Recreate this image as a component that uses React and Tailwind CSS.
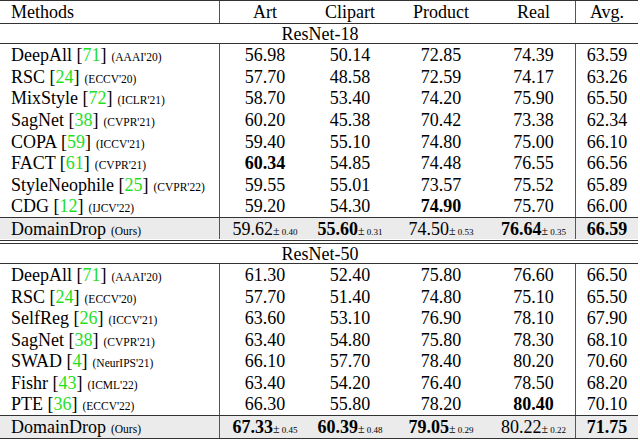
import React from "react";

const W = ["w-[220px]", "w-[90px]", "w-[80px]", "w-[102px]", "w-[84px]", "w-[62px]"];

function Line() {
  return <div className="h-px w-[638px] bg-[#333]" />;
}

function Method({ name, cite, venue }) {
  return (
    <span className="whitespace-nowrap">
      {name}
      {cite && (
        <>
          {" "}[<span className="text-[#1fe01f]">{cite}</span>]
        </>
      )}
      <span className="text-[11.5px] ml-[5px]">{venue}</span>
    </span>
  );
}

function Num({ v, b, pm }) {
  return (
    <span className="whitespace-nowrap">
      <span className={b ? "font-bold" : ""}>{v}</span>
      {pm && (
        <>
          <span className="text-[12px]">±</span>
          <span className="text-[9px]"> {pm}</span>
        </>
      )}
    </span>
  );
}

function Row({ h, shaded, m, vals }) {
  return (
    <div className={`flex w-[638px] ${h} ${shaded ? "bg-[#ebebeb]" : ""}`}>
      <div className={`${W[0]} flex items-center pl-[11px] border-r border-[#555]`}>{m}</div>
      {vals.map((v, i) => (
        <div
          key={i}
          className={`${W[i + 1]} flex items-center justify-center ${i === 3 ? "border-r border-[#555]" : ""}`}
        >
          {v}
        </div>
      ))}
    </div>
  );
}

const r18 = [
  ["DeepAll", "71", "(AAAI'20)", ["56.98", "50.14", "72.85", "74.39", "63.59"]],
  ["RSC", "24", "(ECCV'20)", ["57.70", "48.58", "72.59", "74.17", "63.26"]],
  ["MixStyle", "72", "(ICLR'21)", ["58.70", "53.40", "74.20", "75.90", "65.50"]],
  ["SagNet", "38", "(CVPR'21)", ["60.20", "45.38", "70.42", "73.38", "62.34"]],
  ["COPA", "59", "(ICCV'21)", ["59.40", "55.10", "74.80", "75.00", "66.10"]],
  ["FACT", "61", "(CVPR'21)", ["*60.34", "54.85", "74.48", "76.55", "66.56"]],
  ["StyleNeophile", "25", "(CVPR'22)", ["59.55", "55.01", "73.57", "75.52", "65.89"]],
  ["CDG", "12", "(IJCV'22)", ["59.20", "54.30", "*74.90", "75.70", "66.00"]],
];
const h18 = ["h-[22px]", "h-[21px]", "h-[22px]", "h-[22px]", "h-[21px]", "h-[22px]", "h-[21px]", "h-[22px]"];

const r50 = [
  ["DeepAll", "71", "(AAAI'20)", ["61.30", "52.40", "75.80", "76.60", "66.50"]],
  ["RSC", "24", "(ECCV'20)", ["57.70", "51.40", "74.80", "75.10", "65.50"]],
  ["SelfReg", "26", "(ICCV'21)", ["63.60", "53.10", "76.90", "78.10", "67.90"]],
  ["SagNet", "38", "(CVPR'21)", ["63.40", "54.80", "75.80", "78.30", "68.10"]],
  ["SWAD", "4", "(NeurIPS'21)", ["66.10", "57.70", "78.40", "80.20", "70.60"]],
  ["Fishr", "43", "(ICML'22)", ["63.40", "54.20", "76.40", "78.50", "68.20"]],
  ["PTE", "36", "(ECCV'22)", ["66.30", "55.80", "78.20", "*80.40", "70.10"]],
];
const h50 = ["h-[22px]", "h-[21px]", "h-[22px]", "h-[21px]", "h-[22px]", "h-[21px]", "h-[22px]"];

function cells(vals) {
  return vals.map((v) => (v.startsWith("*") ? <Num v={v.slice(1)} b /> : <Num v={v} />));
}

export default function App() {
  return (
    <div
      className="w-[640px] h-[440px] bg-white text-black text-[18px] leading-none overflow-hidden"
      style={{ fontFamily: '"Liberation Serif", "Times New Roman", serif' }}
    >
      <Line />
      <Row
        h="h-[22px]"
        m={<span>Methods</span>}
        vals={[<span>Art</span>, <span>Clipart</span>, <span>Product</span>, <span>Real</span>, <span>Avg.</span>]}
      />
      <Line />
      <div className="h-[19px] w-[638px] flex items-center justify-center pl-[2px]">ResNet-18</div>
      <Line />
      {r18.map((r, i) => (
        <Row key={i} h={h18[i]} m={<Method name={r[0]} cite={r[1]} venue={r[2]} />} vals={cells(r[3])} />
      ))}
      <Line />
      <Row
        h="h-[21px]"
        shaded
        m={<Method name="DomainDrop" venue="(Ours)" />}
        vals={[
          <Num v="59.62" pm="0.40" />,
          <Num v="55.60" b pm="0.31" />,
          <Num v="74.50" pm="0.53" />,
          <Num v="76.64" b pm="0.35" />,
          <Num v="66.59" b />,
        ]}
      />
      <div className="h-[1px]" />
      <Line />
      <div className="h-[2px]" />
      <Line />
      <div className="h-[19px] w-[638px] flex items-center justify-center pl-[2px]">ResNet-50</div>
      <Line />
      {r50.map((r, i) => (
        <Row key={i} h={h50[i]} m={<Method name={r[0]} cite={r[1]} venue={r[2]} />} vals={cells(r[3])} />
      ))}
      <Line />
      <Row
        h="h-[22px]"
        shaded
        m={<Method name="DomainDrop" venue="(Ours)" />}
        vals={[
          <Num v="67.33" b pm="0.45" />,
          <Num v="60.39" b pm="0.48" />,
          <Num v="79.05" b pm="0.29" />,
          <Num v="80.22" pm="0.22" />,
          <Num v="71.75" b />,
        ]}
      />
      <Line />
    </div>
  );
}
